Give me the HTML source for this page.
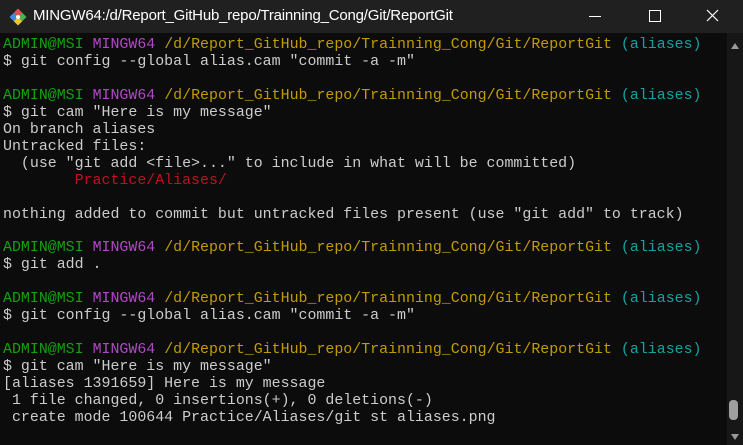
<!DOCTYPE html>
<html><head><meta charset="utf-8"><style>
html,body{margin:0;padding:0;width:743px;height:445px;overflow:hidden;background:#0c0c0c}
#title{position:absolute;left:0;top:0;width:743px;height:33px;background:#202020;color:#fff;font-family:"Liberation Sans",sans-serif;font-size:15px}
#title .t{position:absolute;left:33px;top:7px;letter-spacing:-0.2px}
#term{position:absolute;left:3px;top:37px;font-family:"Liberation Mono",monospace;font-size:14.93px;line-height:16.95px;color:#cccccc;white-space:pre}
.g{color:#13a10e}.m{color:#b148c6}.y{color:#c19c00}.c{color:#13a2a0}.r{color:#c50f1f}
#sb{position:absolute;left:727px;top:33px;width:16px;height:412px;background:#171717}
</style></head><body>
<div id="title">
<svg style="position:absolute;left:9px;top:8px" width="18" height="18" viewBox="0 0 18 18">
<g transform="rotate(45 9 9)"><rect x="3" y="3" width="6" height="6" fill="#e05050"/><rect x="9" y="3" width="6" height="6" fill="#4caf50"/><rect x="3" y="9" width="6" height="6" fill="#3a8ee6"/><rect x="9" y="9" width="6" height="6" fill="#f2c230"/></g>
<circle cx="9" cy="9" r="2" fill="#fff"/></svg>
<span class="t">MINGW64:/d/Report_GitHub_repo/Trainning_Cong/Git/ReportGit</span>
<div style="position:absolute;left:589px;top:16px;width:12px;height:1px;background:#fff"></div>
<div style="position:absolute;left:649px;top:10px;width:10px;height:10px;border:1px solid #fff"></div>
<svg style="position:absolute;left:706px;top:9px" width="13" height="13" viewBox="0 0 13 13"><path d="M1 1L12 12M12 1L1 12" stroke="#fff" stroke-width="1.2"/></svg>
</div>
<div id="sb">
<svg style="position:absolute;left:3px;top:9px" width="10" height="8"><path d="M1 7L5 1L9 7Z" fill="#9a9a9a"/></svg>
<div style="position:absolute;left:2px;top:367px;width:9px;height:20px;border-radius:4px;background:#9f9f9f"></div>
<svg style="position:absolute;left:3px;top:400px" width="10" height="8"><path d="M1 1L9 1L5 7Z" fill="#9a9a9a"/></svg>
</div>
<div id="term"><span class="g">ADMIN@MSI</span> <span class="m">MINGW64</span> <span class="y">/d/Report_GitHub_repo/Trainning_Cong/Git/ReportGit</span> <span class="c">(aliases)</span>
$ git config --global alias.cam "commit -a -m"

<span class="g">ADMIN@MSI</span> <span class="m">MINGW64</span> <span class="y">/d/Report_GitHub_repo/Trainning_Cong/Git/ReportGit</span> <span class="c">(aliases)</span>
$ git cam "Here is my message"
On branch aliases
Untracked files:
  (use "git add &lt;file&gt;..." to include in what will be committed)
        <span class="r">Practice/Aliases/</span>

nothing added to commit but untracked files present (use "git add" to track)

<span class="g">ADMIN@MSI</span> <span class="m">MINGW64</span> <span class="y">/d/Report_GitHub_repo/Trainning_Cong/Git/ReportGit</span> <span class="c">(aliases)</span>
$ git add .

<span class="g">ADMIN@MSI</span> <span class="m">MINGW64</span> <span class="y">/d/Report_GitHub_repo/Trainning_Cong/Git/ReportGit</span> <span class="c">(aliases)</span>
$ git config --global alias.cam "commit -a -m"

<span class="g">ADMIN@MSI</span> <span class="m">MINGW64</span> <span class="y">/d/Report_GitHub_repo/Trainning_Cong/Git/ReportGit</span> <span class="c">(aliases)</span>
$ git cam "Here is my message"
[aliases 1391659] Here is my message
 1 file changed, 0 insertions(+), 0 deletions(-)
 create mode 100644 Practice/Aliases/git st aliases.png</div>
</body></html>
